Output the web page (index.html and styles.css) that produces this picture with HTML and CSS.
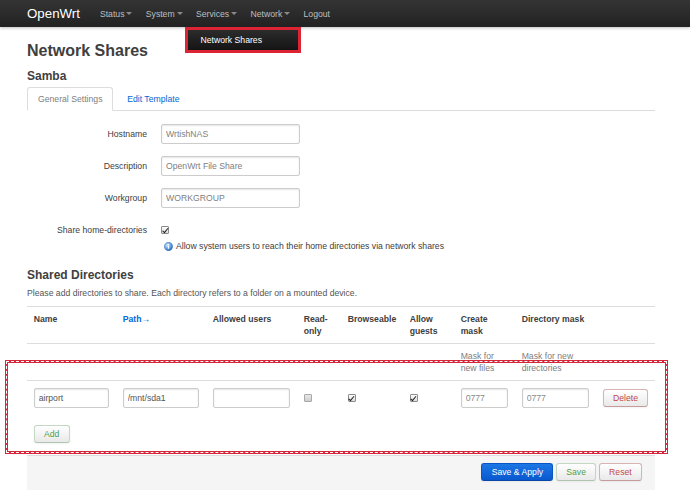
FILE: index.html
```html
<!DOCTYPE html>
<html lang="en">
<head>
<meta charset="utf-8">
<title>Network Shares - OpenWrt</title>
<link rel="stylesheet" href="styles.css">
</head>
<body>
<header class="navbar">
  <a class="brand" href="#">OpenWrt</a>
  <ul class="nav">
    <li>Status<span class="caret"></span></li>
    <li>System<span class="caret"></span></li>
    <li>Services<span class="caret"></span>
      <div class="dropdown-menu">Network Shares</div>
    </li>
    <li>Network<span class="caret"></span></li>
    <li>Logout</li>
  </ul>
</header>

<main class="container">
  <h2 class="page-title">Network Shares</h2>
  <h3 class="section-title">Samba</h3>
  <ul class="tabs">
    <li class="active">General Settings</li>
    <li><a href="#">Edit Template</a></li>
  </ul>

  <div class="form">
    <div class="row"><label>Hostname</label><input class="text" type="text" value="WrtishNAS"></div>
    <div class="row"><label>Description</label><input class="text" type="text" value="OpenWrt File Share"></div>
    <div class="row"><label>Workgroup</label><input class="text" type="text" value="WORKGROUP"></div>
    <div class="row"><label>Share home-directories</label><input class="cb" type="checkbox" checked></div>
  </div>
  <div class="hint">
    <svg class="info" width="9" height="9" viewBox="0 0 10 10"><defs><radialGradient id="ig" cx="38%" cy="35%" r="70%"><stop offset="0" stop-color="#d6ebff"/><stop offset="0.55" stop-color="#6aa6e8"/><stop offset="1" stop-color="#2364b8"/></radialGradient></defs><circle cx="5" cy="5" r="4.6" fill="url(#ig)" stroke="#2a5fa8" stroke-width="0.5"/><rect x="4.4" y="4.3" width="1.2" height="3.2" fill="#fff"/><circle cx="5" cy="3" r="0.75" fill="#fff"/></svg>
    <span>Allow system users to reach their home directories via network shares</span>
  </div>

  <h3 class="section-title shared">Shared Directories</h3>
  <p class="descr">Please add directories to share. Each directory refers to a folder on a mounted device.</p>

  <table class="shares">
    <colgroup>
      <col class="c-name"><col class="c-path"><col class="c-users"><col class="c-ro"><col class="c-browse"><col class="c-guest"><col class="c-cmask"><col class="c-dmask"><col class="c-del">
    </colgroup>
    <thead>
      <tr>
        <th>Name</th>
        <th><span class="sort">Path&#8594;</span></th>
        <th>Allowed users</th>
        <th>Read-only</th>
        <th>Browseable</th>
        <th>Allow guests</th>
        <th>Create mask</th>
        <th>Directory mask</th>
        <th></th>
      </tr>
    </thead>
    <tbody>
      <tr class="descr-row">
        <td></td><td></td><td></td><td></td><td></td><td></td>
        <td>Mask for new files</td>
        <td>Mask for new directories</td>
        <td></td>
      </tr>
      <tr class="data-row">
        <td><input class="text cell" type="text" value="airport"></td>
        <td><input class="text cell" type="text" value="/mnt/sda1"></td>
        <td><input class="text cell" type="text" value=""></td>
        <td><input class="cb off" type="checkbox"></td>
        <td><input class="cb" type="checkbox" checked></td>
        <td><input class="cb" type="checkbox" checked></td>
        <td><input class="text cell mask" type="text" value="0777"></td>
        <td><input class="text cell mask" type="text" value="0777"></td>
        <td><button class="btn btn-red">Delete</button></td>
      </tr>
    </tbody>
  </table>
  <div class="add-row"><button class="btn btn-green">Add</button></div>

  <div class="actions">
    <button class="btn btn-primary">Save &amp; Apply</button>
    <button class="btn btn-green">Save</button>
    <button class="btn btn-red">Reset</button>
  </div>
</main>

<div class="highlight"></div>
</body>
</html>
```

FILE: styles.css
```css
* { box-sizing: border-box; }

body {
  margin: 0;
  font-family: "Liberation Sans", Arial, sans-serif;
  font-size: 8.67px;
  line-height: 12px;
  color: #404040;
  background: #fff;
}

/* navbar */
.navbar {
  height: 27px;
  display: flex;
  align-items: center;
  padding-left: 27px;
  background: linear-gradient(#343434, #222);
  box-shadow: 0 1px 3px rgba(0, 0, 0, .25);
}
.brand {
  color: #fff;
  font-size: 13.3px;
  text-decoration: none;
  padding-right: 13.3px;
}
.nav {
  display: flex;
  list-style: none;
  margin: 0;
  padding: 0;
  height: 27px;
}
.nav li {
  position: relative;
  display: flex;
  align-items: center;
  padding: 0 6.67px;
  color: #bfbfbf;
}
.caret {
  display: inline-block;
  width: 0;
  height: 0;
  margin-left: 2px;
  border-top: 3px solid #8a8a8a;
  border-left: 3px solid transparent;
  border-right: 3px solid transparent;
}
.dropdown-menu {
  position: absolute;
  top: 27px;
  left: -3.9px;
  width: 116px;
  height: 26px;
  border: 3px solid #dc2434;
  background: linear-gradient(#2c2c2c, #141414);
  color: #fff;
  padding-left: 12px;
  display: flex;
  align-items: center;
  white-space: nowrap;
  z-index: 5;
}

/* page */
.container {
  width: 628px;
  margin-left: 27px;
  padding-top: 14px;
}
.page-title {
  margin: 0;
  font-size: 16px;
  line-height: 20px;
  font-weight: bold;
  color: #404040;
}
.section-title {
  margin: 7px 0 0;
  font-size: 12px;
  line-height: 16px;
  font-weight: bold;
  color: #404040;
}
.section-title.shared { margin-top: 15px; }

.tabs {
  display: flex;
  list-style: none;
  margin: 3px 0 0;
  padding: 0;
  height: 24px;
  border-bottom: 1px solid #ddd;
}
.tabs li {
  height: 24px;
  line-height: 22px;
  padding: 0 10px;
  margin-right: 2.7px;
  border: 1px solid transparent;
  border-radius: 3px 3px 0 0;
}
.tabs li.active {
  border-color: #ddd #ddd #fff;
  background: #fff;
  color: #808080;
}
.tabs a { color: #0069d6; text-decoration: none; }

.form {
  padding-top: 13px;
  display: flex;
  flex-direction: column;
  gap: 12px;
}
.row {
  display: flex;
  align-items: center;
  height: 20px;
}
.row label {
  width: 120px;
  margin-right: 14px;
  text-align: right;
  color: #404040;
}
input.text {
  width: 139px;
  height: 20px;
  margin: 0;
  padding: 0 4px;
  font: inherit;
  color: #808080;
  border: 1px solid #ccc;
  border-radius: 2px;
  background: #fff;
  box-shadow: inset 0 1px 2px rgba(0, 0, 0, .1);
}
input.cell { width: 100%; color: #555; }
input.cell.mask { color: #8a8a8a; }

.cb {
  -webkit-appearance: none;
  appearance: none;
  display: block;
  width: 8px;
  height: 8px;
  margin: 0;
  position: relative;
  border: 1px solid #8c8c8c;
  border-radius: 1px;
  background: linear-gradient(#fdfdfd, #dcdcdc);
}
.cb:checked::after {
  content: "";
  position: absolute;
  left: 1.8px;
  top: -0.5px;
  width: 2px;
  height: 4.5px;
  border: solid #1e1e1e;
  border-width: 0 1.4px 1.4px 0;
  transform: rotate(40deg);
}
.cb.off {
  border-color: #a8a8a8;
  background: linear-gradient(#e9e9e9, #cdcdcd);
}

.hint {
  display: flex;
  align-items: center;
  gap: 3px;
  height: 12px;
  margin-left: 137px;
  color: #404040;
}
.info { display: block; flex: none; }

.descr {
  margin: 4px 0 0;
  color: #555;
}

/* table */
.shares {
  width: 628px;
  margin-top: 7px;
  border-collapse: collapse;
  table-layout: fixed;
  border-top: 1px solid #ddd;
}
.c-name { width: 89px; }
.c-path { width: 90px; }
.c-users { width: 91px; }
.c-ro { width: 44px; }
.c-browse { width: 62px; }
.c-guest { width: 51px; }
.c-cmask { width: 61px; }
.c-dmask { width: 81px; }
.c-del { width: 59px; }

.shares th,
.shares td {
  padding: 6px 6.67px;
  text-align: left;
  vertical-align: top;
  line-height: 12px;
}
.shares th {
  font-weight: bold;
  color: #404040;
  border-bottom: 1px solid #ddd;
}
.sort { color: #0069d6; }
.descr-row td {
  color: #808080;
  border-bottom: 1px solid #ddd;
}
.shares .data-row td {
  padding: 7px 6.67px;
  vertical-align: middle;
}

/* buttons */
.btn {
  height: 18px;
  margin: 0;
  padding: 0 9.3px;
  font: inherit;
  line-height: 16px;
  color: #333;
  border: 1px solid #ccc;
  border-bottom-color: #b8b8b8;
  border-radius: 3px;
  background: linear-gradient(#fff, #e9e9e9);
  box-shadow: 0 1px 2px rgba(0, 0, 0, .05);
  white-space: nowrap;
}
.btn-green { color: #4e9f4e; border-color: #c4d6c4 #c4d6c4 #b0c4b0; }
.btn-red { color: #c0474a; border-color: #d8b4b4 #d8b4b4 #c49c9c; }
.btn-primary {
  color: #fff;
  background: linear-gradient(#1c77e4, #0a58cf);
  border-color: #0a55c4 #0a55c4 #0847a8;
}

.add-row { padding: 10px 6.67px 0; }

.actions {
  margin-top: 12px;
  display: flex;
  justify-content: flex-end;
  gap: 2.5px;
  padding: 7px 13px 13px;
  background: #f5f5f5;
  border-top: 1px solid #ddd;
}

/* annotation box laid over the table row */
.highlight {
  position: absolute;
  left: 5px;
  top: 360px;
  width: 663px;
  height: 94px;
  border: 3px solid #d6263a;
  pointer-events: none;
}
.highlight::after {
  content: "";
  position: absolute;
  top: -2px;
  left: -2px;
  right: -2px;
  bottom: -2px;
  border: 1px dashed #fff;
}
```
